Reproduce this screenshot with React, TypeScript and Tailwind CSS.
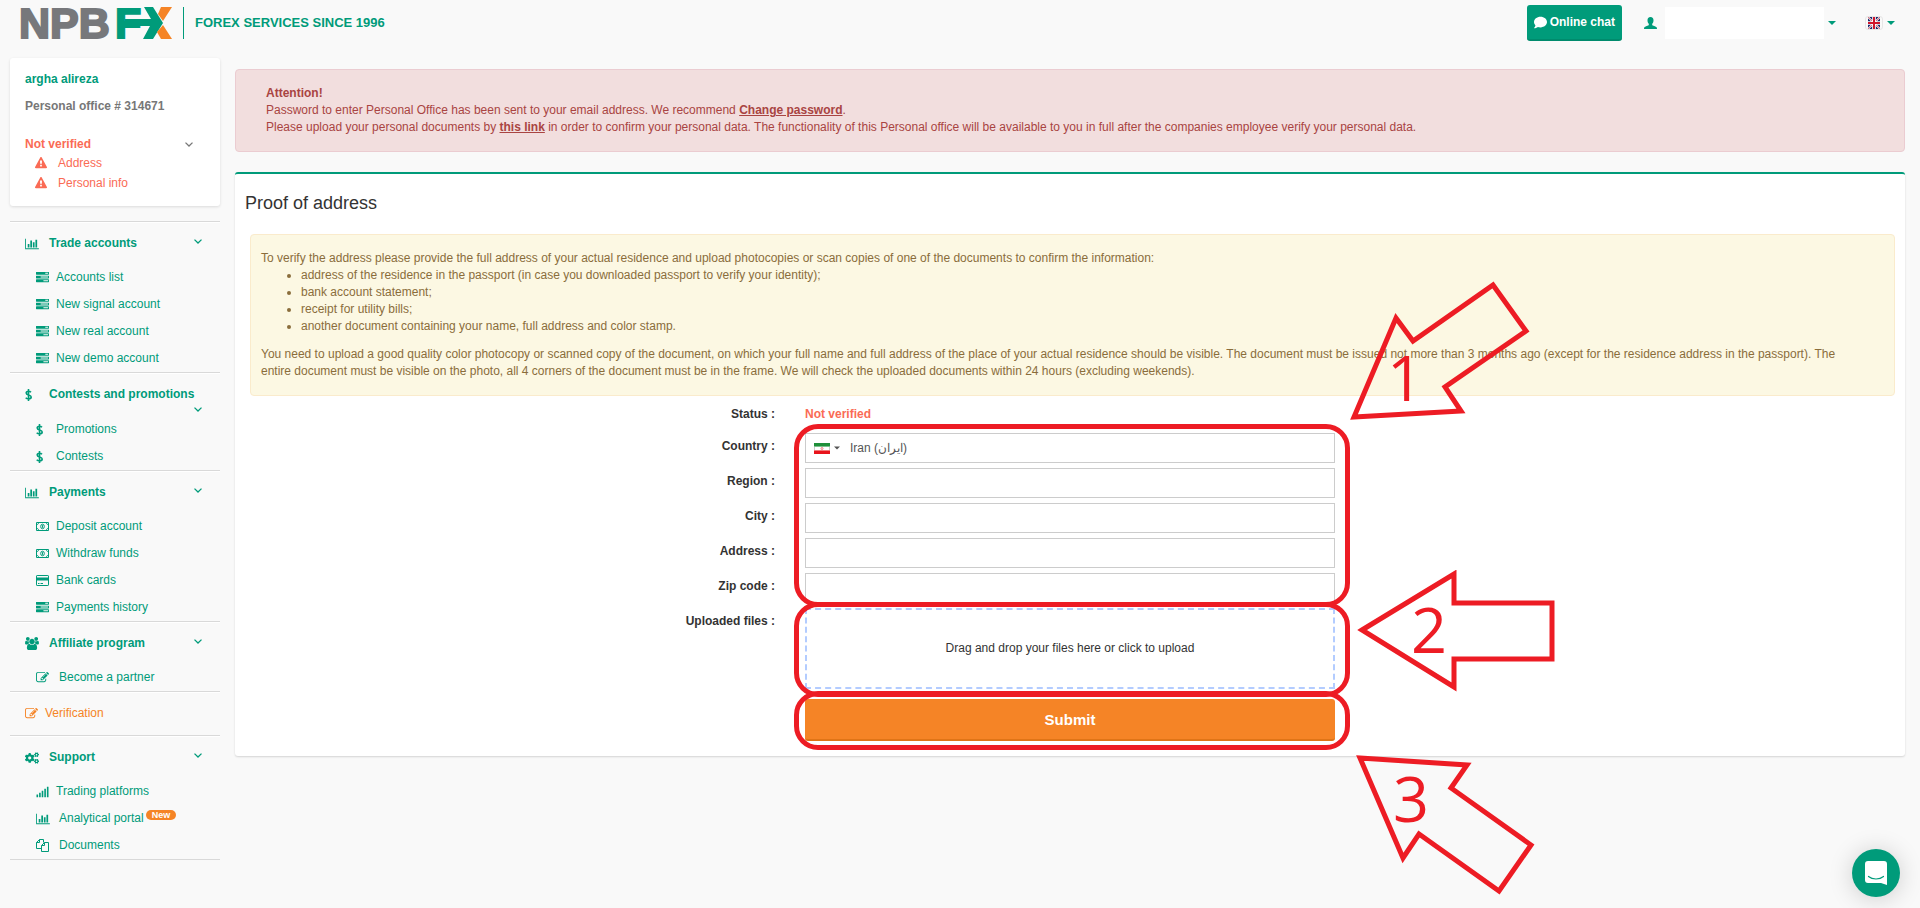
import type { ReactNode } from "react";
import { FaCogs, FaComment, FaSignal } from "react-icons/fa";

type IconProps = { className?: string };

const BarChart = ({ className }: IconProps) => (
  <svg viewBox="0 0 2048 1792" className={className} fill="currentColor" aria-hidden="true">
    <path d="M640 896v512h-256v-512h256zm384-512v1024h-256v-1024h256zm1024 1152v128h-2048v-1536h128v1408h1920zm-640-896v768h-256v-768h256zm384-384v1152h-256v-1152h256z" />
  </svg>
);

const Tasks = ({ className }: IconProps) => (
  <svg viewBox="0 0 1792 1792" className={className} fill="currentColor" aria-hidden="true">
    <path d="M1024 1408h640v-128h-640v128zm-384-512h1024v-128h-1024v128zm640-512h384v-128h-384v128zm512 832v256q0 26-19 45t-45 19h-1664q-26 0-45-19t-19-45v-256q0-26 19-45t45-19h1664q26 0 45 19t19 45zm0-512v256q0 26-19 45t-45 19h-1664q-26 0-45-19t-19-45v-256q0-26 19-45t45-19h1664q26 0 45 19t19 45zm0-512v256q0 26-19 45t-45 19h-1664q-26 0-45-19t-19-45v-256q0-26 19-45t45-19h1664q26 0 45 19t19 45z" />
  </svg>
);

const Edit = ({ className }: IconProps) => (
  <svg viewBox="0 0 1792 1792" className={className} fill="currentColor" aria-hidden="true">
    <path d="M888 1184l116-116-152-152-116 116v56h96v96h56zm440-720q-16-16-33 1l-350 350q-17 17-1 33t33-1l350-350q17-17 1-33zm80 594v190q0 119-84.5 203.5t-203.5 84.5h-832q-119 0-203.5-84.5t-84.5-203.5v-832q0-119 84.5-203.5t203.5-84.5h832q63 0 117 25 15 7 18 23 3 17-9 29l-49 49q-14 14-32 8-23-6-45-6h-832q-66 0-113 47t-47 113v832q0 66 47 113t113 47h832q66 0 113-47t47-113v-126q0-13 9-22l64-64q15-15 35-7t20 29zm-96-738l288 288-672 672h-288v-288zm444 132l-92 92-288-288 92-92q28-28 68-28t68 28l152 152q28 28 28 68t-28 68z" />
  </svg>
);

const Warning = ({ className }: IconProps) => (
  <svg viewBox="0 0 1792 1792" className={className} fill="currentColor" aria-hidden="true">
    <path d="M1024 1375v-190q0-14-9.5-23.5t-22.5-9.5h-192q-13 0-22.5 9.5t-9.5 23.5v190q0 14 9.5 23.5t22.5 9.5h192q13 0 22.5-9.5t9.5-23.5zm-2-374l18-459q0-12-10-19-13-11-24-11h-220q-11 0-24 11-10 7-10 21l17 457q0 10 10 16.5t24 6.5h185q14 0 23.5-6.5t10.5-16.5zm-14-934l768 1408q35 63-2 126-17 29-46.5 46t-63.5 17h-1536q-34 0-63.5-17t-46.5-46q-37-63-2-126l768-1408q17-31 47-49t65-18 65 18 47 49z" />
  </svg>
);

const Users = ({ className }: IconProps) => (
  <svg viewBox="0 0 1920 1792" className={className} fill="currentColor" aria-hidden="true">
    <path d="M593 896q-162 5-265 128h-134q-82 0-138-40.5t-56-118.5q0-353 124-353 6 0 43.5 21t97.5 42.5 119 21.5q67 0 133-23-5 37-5 66 0 139 81 256zm1071 637q0 120-73 189.5t-194 69.5h-874q-121 0-194-69.5t-73-189.5q0-53 3.5-103.5t14-109 26.5-108.5 43-97.5 62-81 85.5-53.5 111.5-20q10 0 43 21.5t73 48 107 48 135 21.5 135-21.5 107-48 73-48 43-21.5q61 0 111.5 20t85.5 53.5 62 81 43 97.5 26.5 108.5 14 109 3.5 103.5zm-1024-1277q0 106-75 181t-181 75-181-75-75-181 75-181 181-75 181 75 75 181zm704 384q0 159-112.5 271.5t-271.5 112.5-271.5-112.5-112.5-271.5 112.5-271.5 271.5-112.5 271.5 112.5 112.5 271.5zm576 225q0 78-56 118.5t-138 40.5h-134q-103-123-265-128 81-117 81-256 0-29-5-66 66 23 133 23 59 0 119-21.5t97.5-42.5 43.5-21q124 0 124 353zm-128-609q0 106-75 181t-181 75-181-75-75-181 75-181 181-75 181 75 75 181z" />
  </svg>
);

const Dollar = ({ className }: IconProps) => (
  <svg viewBox="0 0 7 12" className={className} fill="none" stroke="currentColor" strokeWidth="1.6" aria-hidden="true">
    <path d="M3.5 0v12M6 3.2C5.2 2.4 4.4 2.2 3.5 2.2 2.2 2.2 1.2 2.9 1.2 4c0 2.6 5 1.3 5 4 0 1.2-1.2 1.9-2.6 1.9C2.4 9.9 1.4 9.5.7 8.7" />
  </svg>
);

const Money = ({ className }: IconProps) => (
  <svg viewBox="0 0 13 9" className={className} fill="none" stroke="currentColor" aria-hidden="true">
    <path d="M.5.5h12v8h-12z" />
    <path d="M1 2.5c1 0 1.5-.7 1.5-1.5M12 2.5c-1 0-1.5-.7-1.5-1.5M1 6.5c1 0 1.5.7 1.5 1.5M12 6.5c-1 0-1.5.7-1.5 1.5" />
    <ellipse cx="6.5" cy="4.5" rx="1.8" ry="2.3" />
    <path d="M6.5 3.2v2.6" />
  </svg>
);

const Card = ({ className }: IconProps) => (
  <svg viewBox="0 0 13 11" className={className} fill="none" stroke="currentColor" aria-hidden="true">
    <rect x="0.5" y="0.5" width="12" height="10" rx="0.6" />
    <path d="M0 4h13" strokeWidth="3" />
    <path d="M2 8.5h1.5M4.5 8.5h2.5" />
  </svg>
);

const Files = ({ className }: IconProps) => (
  <svg viewBox="0 0 13 13" className={className} fill="none" stroke="currentColor" aria-hidden="true">
    <path d="M5 9.5H.5V3.5l3-3h4v3M3.5.5v3h-3" />
    <path d="M8.500 3.500h4v9h-7v-6zM8.500 3.500v3h-3" />
  </svg>
);

const User = ({ className }: IconProps) => (
  <svg viewBox="0 0 13 12" className={className} fill="currentColor" aria-hidden="true">
    <path d="M6.5 0C8.500 0 9.600 1.400 9.500 3.400c0 1.500-.6 2.700-1.300 3.400v1.100c0 .5 4.300 1.500 4.600 2.500.1.400.2 1 .2 1.600H0c0-.6.1-1.200.2-1.600.3-1 4.600-2 4.600-2.500V6.800C4.100 6.100 3.500 4.900 3.500 3.400 3.400 1.400 4.500 0 6.500 0z" />
  </svg>
);

const Chevron = ({ className }: IconProps) => (
  <svg viewBox="0 0 8 5" className={className} fill="none" stroke="currentColor" strokeWidth="1.3" aria-hidden="true">
    <path d="M.5.6L4 4 7.5.6" />
  </svg>
);

const Caret = ({ className }: IconProps) => (
  <svg viewBox="0 0 8 4" className={className} fill="currentColor" aria-hidden="true">
    <path d="M0 0h8L4 4z" />
  </svg>
);

const Logo = () => (
  <svg width="155" height="34" viewBox="-3 0 155 34" role="img" aria-label="NPBFX">
    <g fontFamily="'Liberation Sans', Arial, sans-serif" fontWeight="700" fontSize="43" strokeWidth="2">
      <text x="-2" y="32" fill="#77787b" stroke="#77787b">
        NPB
        <tspan x="94" fill="#009b7a" stroke="#009b7a">F</tspan>
      </text>
    </g>
    <g fill="#009b7a">
      <path d="M104 13h26l-7-12h9l10 16-10 16h-10l7-13h-25z" />
    </g>
    <g fill="#f58426">
      <path d="M140 1h11l-9 14-5-7z" />
      <path d="M142 19l9 14h-11l-4-7z" />
    </g>
  </svg>
);

const UkFlag = () => (
  <svg viewBox="0 0 12 12" className="size-3" aria-hidden="true">
    <path fill="#1b2a6b" d="M0 0h12v12H0z" />
    <path stroke="#fff" strokeWidth="1.8" d="M0 0l12 12M12 0L0 12" />
    <path stroke="#cf142b" strokeWidth="0.6" d="M0 0l12 12M12 0L0 12" />
    <path stroke="#fff" strokeWidth="3.6" d="M6 0v12M0 6h12" />
    <path stroke="#cf142b" strokeWidth="2" d="M6 0v12M0 6h12" />
  </svg>
);

const IranFlag = () => (
  <svg viewBox="0 0 16 11" className="h-[11px] w-4" aria-hidden="true">
    <path fill="#fff" d="M0 0h16v11H0z" />
    <path fill="#1f8f3a" d="M0 0h16v3H0z" />
    <path fill="#e8141c" d="M0 8h16v3H0z" />
    <path stroke="#7fc08f" d="M0 3.5h16" />
    <path stroke="#f07a7a" d="M0 7.5h16" />
    <path stroke="#ccc" d="M.5 4v3M15.5 4v3" />
    <circle cx="8" cy="5.500" r="1" fill="none" stroke="#e8646a" strokeWidth="0.8" />
  </svg>
);

type MenuItem = { title: string; icon: ReactNode; badge?: string; wide?: boolean };
type MenuSection = { title: string; icon: ReactNode; items: MenuItem[] };

const menu: MenuSection[] = [
  {
    title: "Trade accounts",
    icon: <BarChart className="h-3 w-[14px]" />,
    items: [
      { title: "Accounts list", icon: <Tasks className="h-[13px] w-[13px]" /> },
      { title: "New signal account", icon: <Tasks className="h-[13px] w-[13px]" /> },
      { title: "New real account", icon: <Tasks className="h-[13px] w-[13px]" /> },
      { title: "New demo account", icon: <Tasks className="h-[13px] w-[13px]" /> },
    ],
  },
  {
    title: "Contests and promotions",
    icon: <Dollar className="h-3 w-[7px]" />,
    items: [
      { title: "Promotions", icon: <Dollar className="h-3 w-[7px]" /> },
      { title: "Contests", icon: <Dollar className="h-3 w-[7px]" /> },
    ],
  },
  {
    title: "Payments",
    icon: <BarChart className="h-3 w-[14px]" />,
    items: [
      { title: "Deposit account", icon: <Money className="h-[9px] w-[13px]" /> },
      { title: "Withdraw funds", icon: <Money className="h-[9px] w-[13px]" /> },
      { title: "Bank cards", icon: <Card className="h-[11px] w-[13px]" /> },
      { title: "Payments history", icon: <Tasks className="h-[13px] w-[13px]" /> },
    ],
  },
  {
    title: "Affiliate program",
    icon: <Users className="h-[13px] w-[14px]" />,
    items: [{ title: "Become a partner", icon: <Edit className="h-[13px] w-[13px]" />, wide: true }],
  },
];

const support: MenuSection = {
  title: "Support",
  icon: <FaCogs className="size-[14px]" />,
  items: [
    { title: "Trading platforms", icon: <FaSignal className="h-3 w-[13px]" /> },
    { title: "Analytical portal", icon: <BarChart className="h-3 w-[14px]" />, badge: "New", wide: true },
    { title: "Documents", icon: <Files className="h-[13px] w-[13px]" />, wide: true },
  ],
};

const Section = ({ title, icon, items }: MenuSection) => (
  <section className="border-t border-[#d9d9d9] pt-[13px] text-[#009b7a] shadow-[inset_0_1px_0_#fff]">
    <button className="flex min-h-[29px] w-full flex-wrap content-start justify-between gap-x-2 pr-[18px] pl-[15px] text-left font-bold">
      <span className="flex items-center">
        <span className="w-6">{icon}</span>
        {title}
      </span>
      <span className="ml-auto flex h-[13px] items-center">
        <Chevron className="h-[5px] w-2" />
      </span>
    </button>
    <ul>
      {items.map((item) => (
        <li key={item.title} className="flex h-[27px] items-center pl-[26px]">
          <a href="#" className="flex items-center">
            <span className={item.wide ? "w-[23px]" : "w-5"}>{item.icon}</span>
            {item.title}
          </a>
          {item.badge && (
            <span className="mb-[7px] ml-[2px] h-[10px] rounded-full bg-[#f58426] px-[6px] text-[9px] leading-[10px] font-bold text-white">
              {item.badge}
            </span>
          )}
        </li>
      ))}
    </ul>
  </section>
);

type ArrowProps = { points: string; label: string; x: number; y: number; className: string };

const Arrow = ({ points, label, x, y, className }: ArrowProps) => (
  <svg width="200" height="144" className={`pointer-events-none absolute left-full z-10 ${className}`}>
    <polygon points={points} fill="none" stroke="#ed1c24" strokeWidth="5" />
    <text x={x} y={y} fill="#ed1c24" fontSize="63" fontFamily="'Open Sans', 'Noto Sans', sans-serif">
      {label}
    </text>
  </svg>
);

const Ring = ({ className }: IconProps) => (
  <div className={`pointer-events-none absolute -right-[15px] -left-[11px] rounded-3xl border-5 border-[#ed1c24] ${className}`} />
);

const fields = [
  { id: "region", label: "Region :" },
  { id: "city", label: "City :" },
  { id: "address", label: "Address :" },
  { id: "zip", label: "Zip code :" },
];

export default function App() {
  return (
    <div className="min-h-screen bg-[#f9f9f9] font-['Liberation_Sans',Arial,sans-serif] text-xs leading-[17px] text-[#333]">
      <header className="mb-3 flex h-[46px] items-center justify-between pr-[25px] pl-[18px]">
        <a href="#" className="flex items-center">
          <Logo />
          <span className="ml-[10px] h-8 border-l border-[#009b7a] pl-[11px] text-[13px] leading-8 font-bold text-[#009b7a]">
            FOREX SERVICES SINCE 1996
          </span>
        </a>
        <div className="flex items-center text-[#009b7a]">
          <button className="flex h-9 items-center gap-[3px] rounded-[3px] border-b-2 border-[#008b6d] bg-[#009b7a] px-[7px] font-bold text-white">
            <FaComment className="size-[13px]" />
            Online chat
          </button>
          <button aria-label="Account" className="ml-[22px] flex items-center">
            <User className="h-3 w-[13px]" />
            <span className="ml-2 h-8 w-[159px] bg-white" />
            <Caret className="ml-1 h-1 w-2" />
          </button>
          <button aria-label="Language" className="ml-[29px] flex items-center gap-1">
            <span className="rounded-[3px] border border-[#e6e6e6] px-[2px]">
              <UkFlag />
            </span>
            <Caret className="h-1 w-2" />
          </button>
        </div>
      </header>

      <div className="flex items-start gap-[15px] pr-[15px] pl-[10px]">
        <aside className="w-[210px] shrink-0">
          <div className="mb-[15px] rounded-[3px] bg-white px-[15px] py-[13px] shadow-[0_1px_3px_rgba(0,0,0,0.12)]">
            <a href="#" className="block font-bold text-[#009b7a]">argha alireza</a>
            <p className="mt-[10px] font-bold text-[#777]">Personal office # 314671</p>
            <button className="mt-[21px] flex w-full items-center justify-between pr-3 font-bold text-[#fa6b55]">
              Not verified
              <Chevron className="h-[5px] w-2 text-[#777]" />
            </button>
            <ul className="text-[#fa6b55]">
              {["Address", "Personal info"].map((item) => (
                <li key={item} className="flex h-5 items-center pl-[10px]">
                  <Warning className="mr-[11px] h-3 w-3" />
                  <a href="#">{item}</a>
                </li>
              ))}
            </ul>
          </div>

          <nav>
            {menu.map((section) => (
              <Section key={section.title} {...section} />
            ))}
            <div className="border-t border-[#d9d9d9] pt-[13px] pb-[13px] shadow-[inset_0_1px_0_#fff]">
              <a href="#" className="flex items-center pl-[15px] text-[#f58426]">
                <span className="w-5"><Edit className="h-[13px] w-[13px]" /></span>
                Verification
              </a>
            </div>
            <Section {...support} />
            <div className="border-t border-[#d9d9d9]" />
          </nav>
        </aside>

        <main className="min-w-0 flex-1 pt-[11px]">
          <div className="rounded border border-[#ebccd1] bg-[#f2dede] py-[15px] pl-[30px] text-[#a94442]">
            <strong>Attention!</strong>
            <p>
              Password to enter Personal Office has been sent to your email address. We recommend{" "}
              <a href="#" className="font-bold underline">Change password</a>.
            </p>
            <p>
              Please upload your personal documents by{" "}
              <a href="#" className="font-bold underline">this link</a> in order to confirm your personal data. The
              functionality of this Personal office will be available to you in full after the companies employee
              verify your personal data.
            </p>
          </div>

          <div className="mt-5 rounded-[3px] border-t-2 border-[#009b7a] bg-white pt-[19px] pb-[15px] shadow-[0_1px_2px_rgba(0,0,0,0.15)]">
            <h1 className="pl-[10px] text-lg leading-5">Proof of address</h1>
            <div className="mt-[21px] mr-[10px] ml-[15px] rounded border border-[#faebcc] bg-[#fcf8e3] py-[15px] pr-[35px] pl-[10px] text-[#8a6d3b]">
              <p>
                To verify the address please provide the full address of your actual residence and upload photocopies
                or scan copies of one of the documents to confirm the information:
              </p>
              <ul className="mb-[11px] list-disc pl-10">
                <li>address of the residence in the passport (in case you downloaded passport to verify your identity);</li>
                <li>bank account statement;</li>
                <li>receipt for utility bills;</li>
                <li>another document containing your name, full address and color stamp.</li>
              </ul>
              <p>
                You need to upload a good quality color photocopy or scanned copy of the document, on which your full
                name and full address of the place of your actual residence should be visible. The document must be
                issued not more than 3 months ago (except for the residence address in the passport). The entire
                document must be visible on the photo, all 4 corners of the document must be in the frame. We will
                check the uploaded documents within 24 hours (excluding weekends).
              </p>
            </div>

            <form className="mt-[10px]" onSubmit={(e) => e.preventDefault()}>
              <div className="grid grid-cols-[1fr_530px_1fr] font-bold">
                <span className="pr-[30px] text-right">Status :</span>
                <span className="text-[#fa6b55]">Not verified</span>
              </div>

              <div className="mt-[10px] grid grid-cols-[1fr_530px_1fr]">
                <div className="flex flex-col gap-[5px] pr-[30px] text-right font-bold">
                  <label htmlFor="country" className="h-[30px] pt-[5px]">Country :</label>
                  {fields.map((field) => (
                    <label key={field.id} htmlFor={field.id} className="h-[30px] pt-[5px]">{field.label}</label>
                  ))}
                </div>
                <div className="relative flex flex-col gap-[5px]">
                  <div className="flex h-[30px] items-center border border-[#ccc] bg-white pl-2 text-[#555]">
                    <button type="button" aria-label="Select country" className="flex items-center gap-1">
                      <IranFlag />
                      <Caret className="h-1 w-[6px]" />
                    </button>
                    <input id="country" defaultValue="Iran (‫ایران‬‎)" className="ml-[10px] min-w-0 flex-1 outline-none" />
                  </div>
                  {fields.map((field) => (
                    <input key={field.id} id={field.id} className="h-[30px] border border-[#ccc] bg-white px-2 outline-none" />
                  ))}
                  <Ring className="-top-[9px] -bottom-1" />
                  <Arrow
                    className="-top-[152px] ml-[15px]"
                    points="4,136 111,130 95,106 176,50 143,4 63,60 46,37"
                    label="1"
                    x={37}
                    y={120}
                  />
                </div>
              </div>

              <div className="mt-[5px] grid grid-cols-[1fr_530px_1fr]">
                <label htmlFor="files" className="pt-[5px] pr-[30px] text-right font-bold">Uploaded files :</label>
                <div className="relative">
                  <label htmlFor="files" className="flex h-[81px] items-center justify-center border-2 border-dashed border-[#b3ccff]">
                    Drag and drop your files here or click to upload
                  </label>
                  <input id="files" type="file" multiple className="sr-only" />
                  <Ring className="-top-[6px] -bottom-2" />
                  <Arrow
                    className="-top-[38px] ml-5"
                    points="7,60 99,4 99,33 197,33 197,89 99,89 99,117"
                    label="2"
                    x={56}
                    y={83}
                  />
                </div>
              </div>

              <div className="mt-[10px] grid grid-cols-[1fr_530px_1fr]">
                <div className="relative col-start-2">
                  <button className="h-[42px] w-full rounded-[3px] border-b-2 border-[#df7417] bg-[#f58426] text-[15px] font-bold text-white">
                    Submit
                  </button>
                  <Ring className="-top-2 -bottom-[9px]" />
                  <Arrow
                    className="top-[55px] ml-5"
                    points="5,4 112,11 96,34 176,91 144,137 64,80 48,104"
                    label="3"
                    x={38}
                    y={68}
                  />
                </div>
              </div>
            </form>
          </div>
        </main>
      </div>

      <button
        aria-label="Open messenger"
        className="fixed right-5 bottom-[11px] flex size-12 items-center justify-center rounded-full bg-[#009b7a] shadow-[0_2px_24px_rgba(0,0,0,0.18)]"
      >
        <svg viewBox="0 0 22 24" className="h-6 w-[22px]" aria-hidden="true">
          <path fill="#fff" d="M3 0h16a3 3 0 013 3v21l-6-2H3a3 3 0 01-3-3V3a3 3 0 013-3z" />
          <path fill="none" stroke="#009b7a" strokeWidth="1.2" strokeLinecap="round" d="M3.5 15.5c4 3.3 11 3.3 15 0" />
        </svg>
      </button>
    </div>
  );
}
